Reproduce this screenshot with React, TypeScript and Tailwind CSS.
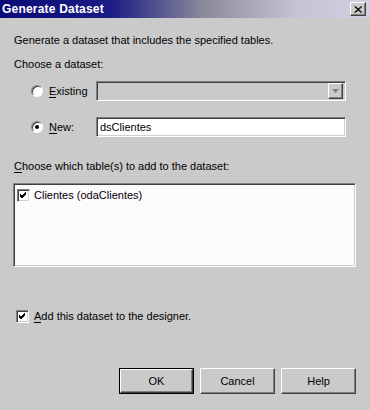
import React from "react";

const font = "font-['Liberation_Sans','DejaVu_Sans',sans-serif]";
const sunken =
  "border border-t-[#808080] border-l-[#808080] border-r-white border-b-white shadow-[inset_1px_1px_0_#404040,inset_-1px_-1px_0_#d4d0c8]";
const raised =
  "border border-t-white border-l-white border-r-[#404040] border-b-[#404040] shadow-[inset_-1px_-1px_0_#808080]";

const Radio = ({ checked }: { checked?: boolean }) => (
  <span className="relative w-[12px] h-[12px] rounded-full bg-white border border-t-[#808080] border-l-[#808080] border-r-white border-b-white shadow-[inset_1px_1px_0_#404040] flex items-center justify-center shrink-0">
    {checked && <span className="w-[4px] h-[4px] rounded-full bg-black" />}
  </span>
);

const Check = () => (
  <span className={`w-[13px] h-[13px] bg-white flex items-center justify-center shrink-0 ${sunken}`}>
    <svg width="9" height="9" viewBox="0 0 9 9">
      <path d="M1 4 L3 6 L7 2 M1 5 L3 7 L7 3 M1 3 L3 5 L7 1" stroke="#000" strokeWidth="1" fill="none" />
    </svg>
  </span>
);

const Button = ({ label, isDefault }: { label: string; isDefault?: boolean }) => (
  <div className={`w-[75px] h-[26px] ${isDefault ? "border border-black" : ""}`}>
    <div className={`w-full h-full flex items-center justify-center text-[11px] text-black ${raised}`}>
      {label}
    </div>
  </div>
);

const Key = ({ k }: { k: string }) => (
  <u className="no-underline border-b border-black leading-[11px] inline-block">{k}</u>
);

export default function App() {
  return (
    <div className={`w-[370px] h-[410px] bg-[#cacaca] flex flex-col text-[11px] leading-[14px] text-black ${font}`}>
      <div className="h-[18px] flex items-center justify-between pl-[2px] pr-[4px] bg-[linear-gradient(90deg,#0a0a78_0%,#1c1c86_30%,#8a8a9a_55%,#c4c4d4_80%,#d0d0e0_100%)]">
        <span className="text-white font-bold text-[12px] tracking-[0.2px]">Generate Dataset</span>
        <div className={`w-[16px] h-[14px] bg-[#cacaca] flex items-center justify-center ${raised}`}>
          <svg width="8" height="7" viewBox="0 0 8 7">
            <path d="M0.5 0.5 L7 6.5 M1.5 0.5 L8 6.5 M7 0.5 L0.5 6.5 M8 0.5 L1.5 6.5" stroke="#000" strokeWidth="1" />
          </svg>
        </div>
      </div>

      <div className="flex flex-col pl-[13px] pr-[14px]">
        <p className="mt-[15px] pl-[1px]">Generate a dataset that includes the specified tables.</p>
        <p className="mt-[10px] pl-[1px]">Choose a dataset:</p>

        <div className="mt-[10px] h-[20px] flex items-center pl-[18px]">
          <Radio />
          <span className="ml-[6px] w-[47px]">
            <Key k="E" />xisting
          </span>
          <div className={`w-[250px] h-[20px] bg-[#cacaca] flex items-center justify-end pr-[2px] ${sunken}`}>
            <div className={`w-[15px] h-[16px] bg-[#cacaca] flex items-center justify-center ${raised}`}>
              <svg width="7" height="4" viewBox="0 0 7 4">
                <path d="M0 0 H7 L3.5 4 Z" fill="#808080" />
              </svg>
            </div>
          </div>
        </div>

        <div className="mt-[16px] h-[20px] flex items-center pl-[18px]">
          <Radio checked />
          <span className="ml-[6px] w-[47px]">
            <Key k="N" />ew:
          </span>
          <div className={`w-[250px] h-[20px] bg-white flex items-center pl-[3px] ${sunken}`}>dsClientes</div>
        </div>

        <p className="mt-[22px] pl-[1px]">
          <Key k="C" />hoose which table(s) to add to the dataset:
        </p>

        <div className={`mt-[10px] w-[343px] h-[84px] bg-[#fdfafd] pt-[4px] pl-[3px] ${sunken}`}>
          <div className="flex items-center gap-[4px]">
            <Check />
            <span>Clientes (odaClientes)</span>
          </div>
        </div>

        <div className="mt-[42px] flex items-center pl-[3px] gap-[5px]">
          <Check />
          <span>
            <Key k="A" />dd this dataset to the designer.
          </span>
        </div>

        <div className="mt-[45px] flex justify-end gap-[6px]">
          <Button label="OK" isDefault />
          <Button label="Cancel" />
          <Button label="Help" />
        </div>
      </div>
    </div>
  );
}
